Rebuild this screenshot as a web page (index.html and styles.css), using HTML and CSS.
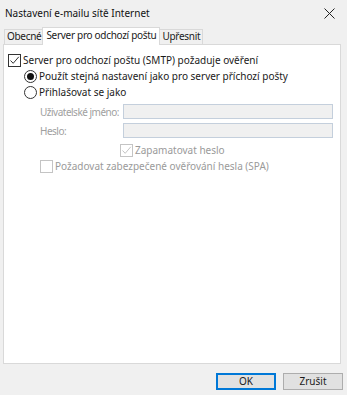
FILE: index.html
```html
<!DOCTYPE html>
<html>

<head>
    <meta charset="utf-8">
    <title>Nastavení e-mailu sítě Internet</title>
    <link rel="stylesheet" href="styles.css">
</head>

<body>
    <div class="dialog">
        <div class="titlebar">
            <span class="title">Nastavení e-mailu sítě Internet</span>
            <svg class="close" width="11" height="11" viewBox="0 0 11 11">
                <path d="M0.5 0.5 L10.5 10.5 M10.5 0.5 L0.5 10.5" stroke="#222" stroke-width="1" fill="none"/>
            </svg>
        </div>
        <div class="tabs">
            <div class="tab">Obecné</div>
            <div class="tab cur">Server pro odchozí poštu</div>
            <div class="tab">Upřesnit</div>
        </div>
        <div class="panel">
            <div class="row">
                <span class="check">
                    <svg width="11" height="11" viewBox="0 0 11 11"><path d="M1.5 5.5 L4.2 8.3 L9.8 1.8" stroke="#333" stroke-width="1" fill="none"/></svg>
                </span>
                <span class="label">Server pro odchozí poštu (SMTP) požaduje ověření</span>
            </div>
            <div class="sub">
                <div class="row">
                    <span class="radio sel"></span>
                    <span class="label">Použít stejná nastavení jako pro server příchozí pošty</span>
                </div>
                <div class="row">
                    <span class="radio"></span>
                    <span class="label">Přihlašovat se jako</span>
                </div>
                <div class="fields">
                    <span class="flabel">Uživatelské jméno:</span>
                    <span class="input"></span>
                    <span class="flabel">Heslo:</span>
                    <span class="input"></span>
                </div>
                <div class="login">
                    <div class="row remember">
                        <span class="check dis">
                            <svg width="11" height="11" viewBox="0 0 11 11"><path d="M1.5 5.5 L4.2 8.3 L9.8 1.8" stroke="#c4c4c4" stroke-width="1" fill="none"/></svg>
                        </span>
                        <span class="label dim">Zapamatovat heslo</span>
                    </div>
                    <div class="row">
                        <span class="check dis"></span>
                        <span class="label dim">Požadovat zabezpečené ověřování hesla (SPA)</span>
                    </div>
                </div>
            </div>
        </div>
        <div class="buttons">
            <div class="btn def">OK</div>
            <div class="btn">Zrušit</div>
        </div>
    </div>
</body>

</html>
```

FILE: styles.css
```css
* {
    padding: 0;
    margin: 0;
    box-sizing: border-box;
}

body {
    background: #f0f0f0;
    font-family: "Noto Sans", "Open Sans", sans-serif;
    font-size: 10px;
    color: #1a1a1a;
}

.dialog {
    width: 347px;
    height: 395px;
    display: flex;
    flex-direction: column;
}

.titlebar {
    height: 26px;
    display: flex;
    align-items: center;
    justify-content: space-between;
    padding: 0 12px 0 5px;
}

.title {
    font-size: 10px;
    color: #111;
}

.tabs {
    display: flex;
    align-items: flex-end;
    height: 18px;
    padding-left: 4px;
    position: relative;
    z-index: 1;
}

.tab {
    height: 15px;
    line-height: 13px;
    padding: 0 2px;
    letter-spacing: -0.3px;
    border: 1px solid #d9d9d9;
    border-bottom: none;
    background: #f0f0f0;
    margin-right: -1px;
}

.tab.cur {
    height: 18px;
    background: #fff;
    padding: 0 3px;
    line-height: 14px;
    margin: 0 -1px -1px -1px;
}

.panel {
    margin: 0 6px 0 3px;
    height: 320px;
    background: #fff;
    border: 1px solid #d9d9d9;
    padding: 7px 4px;
}

.row {
    display: flex;
    align-items: center;
    height: 16px;
}

.check {
    flex: none;
    width: 13px;
    height: 13px;
    border: 1px solid #333;
    background: #fff;
    display: flex;
    align-items: center;
    justify-content: center;
    margin-right: 2px;
}

.check.dis {
    border-color: #c4c4c4;
}

.radio {
    flex: none;
    width: 13px;
    height: 13px;
    border: 1px solid #333;
    border-radius: 50%;
    background: #fff;
    margin-right: 2px;
    display: flex;
    align-items: center;
    justify-content: center;
}

.radio.sel::after {
    content: "";
    width: 7px;
    height: 7px;
    border-radius: 50%;
    background: #111;
}

.sub {
    padding-left: 16px;
}

.fields {
    display: grid;
    grid-template-columns: 83px 210px;
    row-gap: 4px;
    align-items: center;
    margin: 4px 0 0 16px;
}

.flabel {
    white-space: nowrap;
    letter-spacing: -0.5px;
    color: #a0a0a0;
}

.input {
    height: 15px;
    background: #f0f0f0;
    border: 1px solid #c4cfdc;
}

.login {
    padding-left: 16px;
    margin-top: 4px;
}

.remember {
    padding-left: 80px;
}

.label {
    white-space: nowrap;
}

.dim {
    color: #9a9a9a;
}

.buttons {
    display: flex;
    justify-content: flex-end;
    gap: 7px;
    padding: 9px 4px 0 0;
}

.btn {
    width: 60px;
    height: 17px;
    line-height: 15px;
    text-align: center;
    background: #e1e1e1;
    border: 1px solid #adadad;
}

.btn.def {
    border: 2px solid #0078d7;
    line-height: 13px;
}
```
